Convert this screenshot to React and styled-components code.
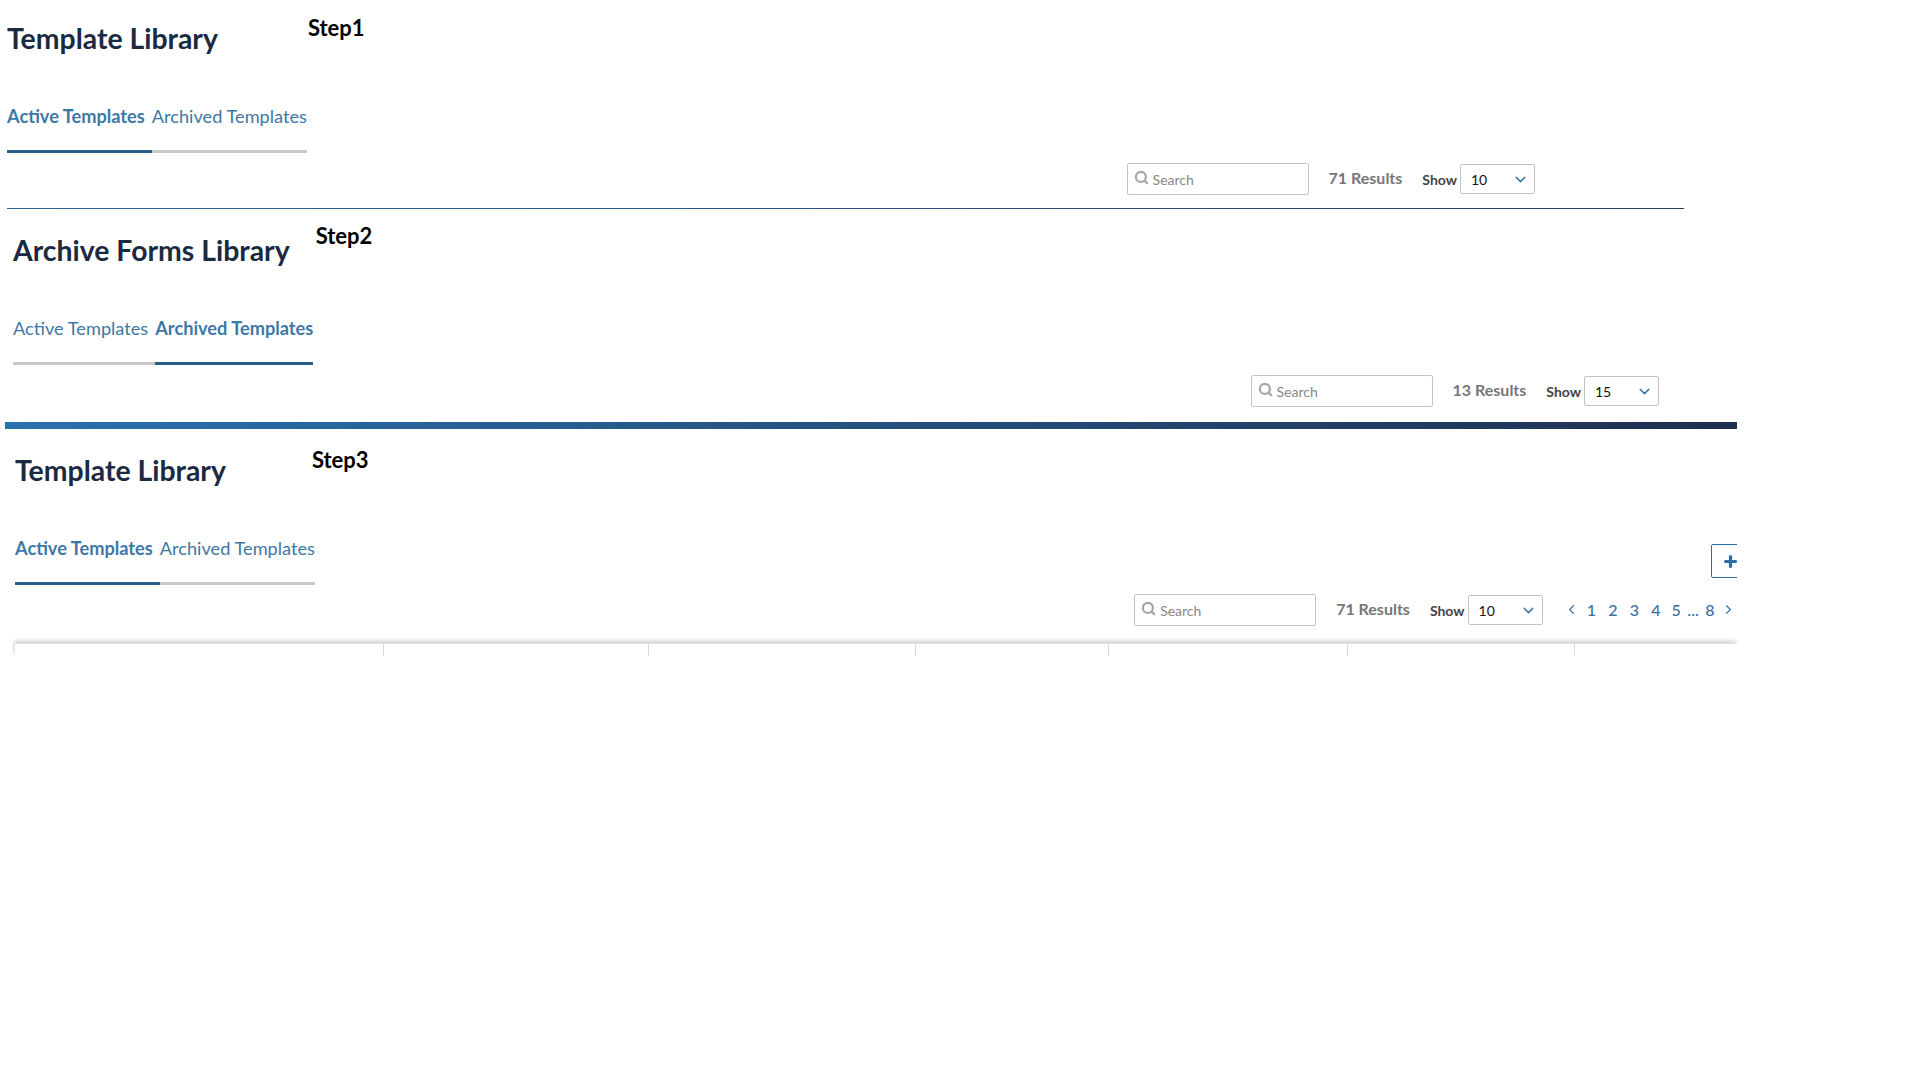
import React from "react";
import styled, { createGlobalStyle } from "styled-components";
import { Search, ChevronDown, ChevronLeft, ChevronRight, Plus } from "lucide-react";

const GlobalStyle = createGlobalStyle`
    html, body {
        margin: 0;
        padding: 0;
        background: #fff;
    }
    body {
        font-family: "Lato", "Liberation Sans", sans-serif;
    }
`

const App = () => {
    return (
        <Page>
            <GlobalStyle />
            <Step
                title="Template Library"
                step="Step1"
                stepGap={90}
                stepUp={5}
                left={7}
                top={20}
                active={0}
                results={71}
                show={10}
                right={202}
            />
            <ThinRule />
            <Step
                title="Archive Forms Library"
                step="Step2"
                stepGap={26}
                stepUp={9}
                left={13}
                top={23}
                active={1}
                results={13}
                show={15}
                right={78}
            />
            <ThickRule />
            <Step
                title="Template Library"
                step="Step3"
                stepGap={86}
                stepUp={5}
                left={15}
                top={23}
                active={0}
                results={71}
                show={10}
                right={1}
                full
            />
        </Page>
    )
}

const Step = ({ title, step, stepGap, stepUp, left, top, active, results, show, right, full }) => (
    <Section $left={left} $top={top}>
        <TitleRow>
            <Title>{title}</Title>
            <StepLabel $gap={stepGap} $up={stepUp}>{step}</StepLabel>
        </TitleRow>
        <TabRow>
            <Tabs>
                <Tab $active={active === 0} $first>Active Templates</Tab>
                <Tab $active={active === 1}>Archived Templates</Tab>
            </Tabs>
            {full && (
                <AddButton>
                    <Plus size={17} strokeWidth={4.5} />
                </AddButton>
            )}
        </TabRow>
        <Toolbar $right={right} $full={full}>
            <SearchBox>
                <Search size={15} strokeWidth={3.5} color="#a5a5a5" />
                <span>Search</span>
            </SearchBox>
            <Results>{results} Results</Results>
            <ShowLabel>Show</ShowLabel>
            <PageSize>
                {show}
                <ChevronDown size={17} strokeWidth={2} color="#3c78a8" />
            </PageSize>
            {full && (
                <Pager>
                    <ChevronLeft size={15} strokeWidth={2} color="#4a7ba3" />
                    {[1, 2, 3, 4].map((n) => (
                        <PageNum key={n}>{n}</PageNum>
                    ))}
                    <LastPages>5 ... 8</LastPages>
                    <ChevronRight size={15} strokeWidth={2} color="#4a7ba3" />
                </Pager>
            )}
        </Toolbar>
        {full && (
            <TableHead>
                {[369, 265, 267, 193, 239, 227, 200].map((w) => (
                    <HeadCell key={w} $width={w} />
                ))}
            </TableHead>
        )}
    </Section>
)

const Page = styled.div`
    width: 1737px;
    min-height: 1087px;
    overflow: hidden;
    background: #fff;
`

const Section = styled.section`
    padding: ${(p) => p.$top}px 0 0 ${(p) => p.$left}px;
    overflow: hidden;
`

const TitleRow = styled.div`
    display: flex;
    align-items: flex-start;
`

const Title = styled.h1`
    margin: 0;
    font-size: 28.4px;
    line-height: 36px;
    font-weight: 700;
    color: #1b2a41;
`

const StepLabel = styled.div`
    margin: -${(p) => p.$up}px 0 0 ${(p) => p.$gap}px;
    font-size: 22px;
    line-height: 26px;
    font-weight: 700;
    color: #000;
`

const TabRow = styled.div`
    display: flex;
    align-items: center;
    justify-content: space-between;
    margin-top: 48px;
`

const Tabs = styled.div`
    display: flex;
`

const Tab = styled.div`
    padding: 0 ${(p) => (p.$first ? "7px" : "0")} 22px 0;
    font-size: 18.2px;
    line-height: 24px;
    font-weight: ${(p) => (p.$active ? 700 : 400)};
    color: #3f78a6;
    border-bottom: 3px solid ${(p) => (p.$active ? "#2a5f8a" : "#c8c8c8")};
`

const AddButton = styled.div`
    display: flex;
    align-items: center;
    justify-content: center;
    flex-shrink: 0;
    width: 38px;
    height: 34px;
    margin: 1px -12px 0 0;
    box-sizing: border-box;
    border: 1px solid #2a6ea8;
    border-radius: 2px;
    color: #2a6ea8;
`

const Toolbar = styled.div`
    display: flex;
    align-items: center;
    justify-content: flex-end;
    height: 32px;
    margin-top: ${(p) => (p.$full ? "9px" : "10px")};
    padding-right: ${(p) => p.$right}px;
`

const SearchBox = styled.div`
    display: flex;
    align-items: center;
    gap: 4px;
    width: 182px;
    height: 32px;
    box-sizing: border-box;
    padding: 0 6px;
    border: 1px solid #c4c4c4;
    border-radius: 2px;
    font-size: 14px;
    color: #888;
    svg {
        margin-top: -3px;
    }
`

const Results = styled.div`
    margin-left: 20px;
    font-size: 16px;
    font-weight: 700;
    color: #777;
    margin-top: -3px;
`

const ShowLabel = styled.div`
    margin-left: 20px;
    font-size: 14px;
    font-weight: 700;
    color: #444;
`

const PageSize = styled.div`
    display: flex;
    align-items: center;
    justify-content: space-between;
    width: 75px;
    height: 30px;
    margin-left: 3px;
    box-sizing: border-box;
    padding: 0 5px 0 10px;
    border: 1px solid #c4c4c4;
    border-radius: 2px;
    font-size: 14px;
    color: #111;
`

const Pager = styled.div`
    display: flex;
    align-items: center;
    margin-left: 21px;
    font-size: 16px;
    font-weight: 500;
    color: #3c6f9e;
    margin-top: -1px;
    svg:first-child {
        margin-right: 2px;
    }
    svg:last-child {
        margin-left: 2.5px;
    }
`

const PageNum = styled.span`
    width: 21.5px;
    text-align: center;
`

const LastPages = styled.span`
    margin: 0 4px 0 5px;
    word-spacing: 2.5px;
`

const TableHead = styled.div`
    display: flex;
    height: 13px;
    margin: 17px 0 0 0;
    border-top: 1px solid #e0e0e0;
    box-shadow: -1px -2px 4px rgba(0, 0, 0, 0.2);
    box-sizing: border-box;
`

const HeadCell = styled.div`
    width: ${(p) => p.$width}px;
    flex-shrink: 0;
    box-sizing: border-box;
    border-right: 1px solid #d8d8d8;
`

const ThinRule = styled.hr`
    width: 1677px;
    height: 1px;
    margin: 13px 0 0 7px;
    border: none;
    background: linear-gradient(90deg, #2f6a9a, #24405f);
`

const ThickRule = styled.hr`
    width: 1732px;
    height: 7px;
    margin: 15px 0 0 5px;
    border: none;
    background: linear-gradient(90deg, #2a72ae, #1e2f50);
`

export default App
